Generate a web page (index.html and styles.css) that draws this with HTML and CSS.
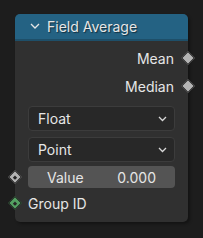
FILE: index.html
```html
<!DOCTYPE html>
<html lang="en">
<head>
  <meta charset="UTF-8" />
  <title>Field Average</title>
  <link rel="stylesheet" href="styles.css">
</head>
<body>
  <!-- Field Average node -->
  <div class="node">
    <div class="node-header">
      <svg class="collapse" width="10" height="6" viewBox="0 0 10 6">
        <path d="M1 1 L5 5 L9 1" fill="none" stroke="#e6e6e6" stroke-width="1.3" />
      </svg>
      <span>Field Average</span>
    </div>

    <div class="node-body">
      <div class="row out">
        <span>Mean</span>
        <i class="socket socket-right"></i>
      </div>
      <div class="row out">
        <span>Median</span>
        <i class="socket socket-right"></i>
      </div>

      <div class="dropdown first">
        <span>Float</span>
        <svg width="9" height="6" viewBox="0 0 9 6">
          <path d="M1 1 L4.5 4.5 L8 1" fill="none" stroke="#d8d8d8" stroke-width="1.3" />
        </svg>
      </div>
      <div class="dropdown last">
        <span>Point</span>
        <svg width="9" height="6" viewBox="0 0 9 6">
          <path d="M1 1 L4.5 4.5 L8 1" fill="none" stroke="#d8d8d8" stroke-width="1.3" />
        </svg>
      </div>

      <div class="row in">
        <i class="socket socket-left field"></i>
        <div class="value-field">
          <span>Value</span>
          <span>0.000</span>
        </div>
      </div>
      <div class="row in">
        <i class="socket socket-left field green"></i>
        <span>Group ID</span>
      </div>
    </div>
  </div>
</body>
</html>
```

FILE: styles.css
```css
/* ============================
   Base
   ============================ */
* {
  margin: 0;
  padding: 0;
  box-sizing: border-box;
}

body {
  width: 203px;
  height: 238px;
  background-color: #1d1d1d;
  font-family: Inter, "Noto Sans", sans-serif;
  font-size: 14px;
  color: #e6e6e6;
  padding: 14px 0 0 15px;
  overflow: hidden;
}

/* ============================
   Node
   ============================ */
.node {
  position: relative;
  width: 173px;
  height: 208px;
  background-color: #303030;
  border-radius: 5px;
  box-shadow: 2px 2px 3px rgba(0, 0, 0, 0.35);
}

.node-header {
  display: flex;
  align-items: center;
  gap: 7px;
  height: 27px;
  padding: 0 0 1px 15px;
  background-color: #246283;
  border-radius: 5px 5px 0 0;
  border-bottom: 2px solid #1e4f69;
  text-shadow: 1px 1px 1px rgba(0, 0, 0, 0.5);
}

.node-body {
  display: flex;
  flex-direction: column;
  padding-top: 3px;
}

/* ============================
   Rows + sockets
   ============================ */
.row {
  position: relative;
  display: flex;
  align-items: center;
  height: 28px;
}

.row.out {
  justify-content: flex-end;
  padding-right: 14px;
}

.row.in {
  height: 26px;
  padding: 0 13px;
}

.socket {
  position: absolute;
  top: 50%;
  width: 10px;
  height: 10px;
  background-color: #b4b4b4;
  border: 1px solid #1c1c1c;
  transform: translate(-50%, -50%) rotate(45deg);
}

.socket-right {
  left: 173px;
}

.socket-left {
  left: 0;
}

.socket.field::after {
  content: "";
  position: absolute;
  left: 2.5px;
  top: 2.5px;
  width: 3px;
  height: 3px;
  background-color: #262626;
}

.socket.green {
  background-color: #54a162;
}

/* ============================
   Dropdowns + value field
   ============================ */
.dropdown {
  display: flex;
  justify-content: space-between;
  align-items: center;
  height: 25px;
  margin: 0 13px 6px 13px;
  padding: 0 7px 0 9px;
  background-color: #282828;
  border: 1px solid #3c3c3c;
  border-radius: 4px;
}

.dropdown.first {
  margin-top: 6px;
}

.dropdown.last {
  margin-bottom: 2px;
}

.value-field {
  display: flex;
  justify-content: space-between;
  align-items: center;
  flex: 1;
  height: 22px;
  padding: 0 19px 0 19px;
  background-color: #545454;
  border-radius: 4px;
}
```
